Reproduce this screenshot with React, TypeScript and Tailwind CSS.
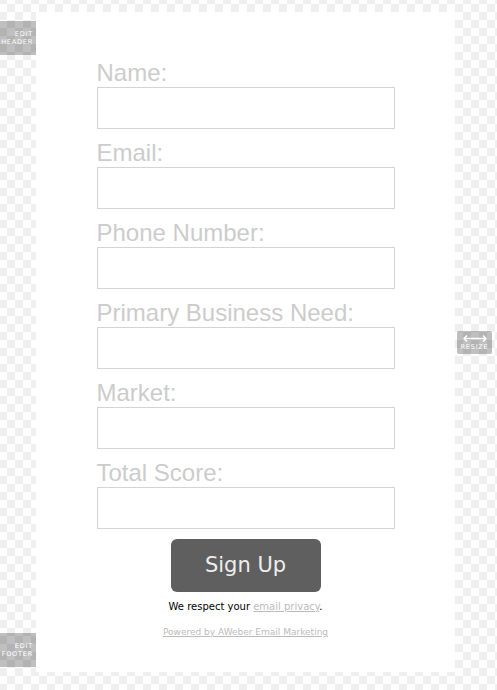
import type { JSX } from "react";

const fields = ["Name:", "Email:", "Phone Number:", "Primary Business Need:", "Market:", "Total Score:"];

const EditTab = ({ label, className }: { label: string; className: string }): JSX.Element => (
    <div className={`absolute left-0 w-[36px] h-[34px] bg-[rgba(0,0,0,0.25)] flex flex-col items-end justify-center pr-[3px] text-white text-[6.5px] leading-[8px] tracking-[0.8px] font-['DejaVu_Sans',sans-serif] ${className}`}>
        <span>EDIT</span>
        <span className="whitespace-nowrap">{label}</span>
    </div>
);

export default function App(): JSX.Element {
    return (
        <div className="relative w-full h-[690px] overflow-hidden bg-white bg-[repeating-conic-gradient(#efefef_0_25%,#ffffff_0_50%)] bg-size-[16px_16px] bg-position-[-1px_4px]">
            <div className="ml-[36px] pt-[12px]">
                <div className="w-[419px] h-[660px] bg-white flex flex-col items-center pt-[48px]">
                    <div className="w-[298px] flex flex-col">
                        {fields.map((f, i) => (
                            <div key={f} className={`flex flex-col ${i === fields.length - 1 ? "mb-[10px]" : "mb-[11px]"}`}>
                                <label className="text-[24px] leading-[26px] text-[#cccccc] font-['Liberation_Sans',Arial,sans-serif] mb-[1px] whitespace-nowrap">
                                    {f}
                                </label>
                                <input type="text" className="h-[42px] w-full border border-[#d4d4d4] bg-white outline-none" />
                            </div>
                        ))}
                    </div>
                    <button className="w-[150px] h-[53px] rounded-[6px] bg-[#5f5f5f] text-[#eeeeee] text-[21px] font-['DejaVu_Sans',Verdana,sans-serif]">
                        Sign Up
                    </button>
                    <p className="mt-[9px] text-[10px] leading-[12px] text-black font-['DejaVu_Sans',Verdana,sans-serif]">
                        We respect your <a className="text-[#bbbbbb] underline">email privacy</a>.
                    </p>
                    <a className="mt-[13px] text-[9px] leading-[12px] text-[#bbbbbb] underline font-['DejaVu_Sans',Verdana,sans-serif]">
                        Powered by AWeber Email Marketing
                    </a>
                </div>
            </div>

            <EditTab label="HEADER" className="top-[21px]" />
            <EditTab label="FOOTER" className="top-[633px]" />

            <div className="absolute left-[457px] top-[331px] w-[35px] h-[23px] rounded-[2px] bg-[rgba(0,0,0,0.25)] flex flex-col items-center justify-center">
                <svg width="24" height="7" viewBox="0 0 24 7" fill="none" stroke="white" strokeWidth="1.5">
                    <path d="M1 3.5h22M4 0.5L1 3.5l3 3M20 0.5l3 3-3 3" />
                </svg>
                <span className="text-white text-[6.5px] leading-[8px] tracking-[0.8px] font-['DejaVu_Sans',sans-serif] mt-[1px]">RESIZE</span>
            </div>
        </div>
    );
}
